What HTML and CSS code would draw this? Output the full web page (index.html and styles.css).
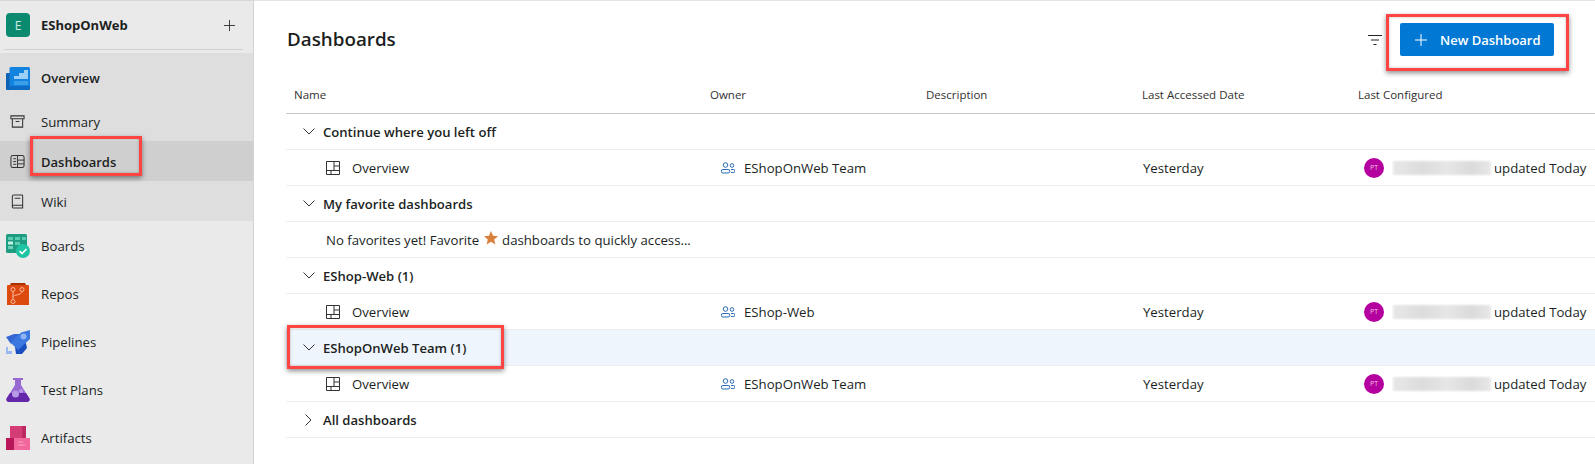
FILE: index.html
```html
<!DOCTYPE html>
<html lang="en">
<head>
  <meta charset="UTF-8" />
  <title>Dashboards - EShopOnWeb</title>
  <link rel="stylesheet" href="styles.css">
</head>
<body>

  <nav class="sidebar">
    <div class="project">
      <span class="project-badge">E</span>
      <span class="project-name">EShopOnWeb</span>
      <svg class="project-add" viewBox="0 0 14 14"><path d="M7 1v12M1 7h12" stroke="#333" stroke-width="1" fill="none"/></svg>
    </div>

    <div class="nav-group">
      <div class="nav-head">
        <svg class="nav-logo" viewBox="0 0 24 24">
          <rect x="0" y="7" width="6" height="17" rx="1" fill="#0e62b0"/>
          <rect x="3.500" y="1" width="20.500" height="23" rx="1.500" fill="#1383e0"/>
          <path d="M8 13V10h5V7h5V4h4v9z" fill="#9cd0f7"/>
          <path d="M8 15h14v4H8z" fill="#3a9ee8"/>
          <path d="M3.500 20h20.500v2.500a1.500 1.500 0 0 1-1.500 1.500H3.500z" fill="#0f6cc4"/>
        </svg>
        <span>Overview</span>
      </div>
      <div class="nav-sub">
        <svg class="nav-icon" viewBox="0 0 16 16"><path d="M1 2h14v3H1zM2.500 5v9h11V5M6 8h4" fill="none" stroke="#333" stroke-width="1.100"/></svg>
        <span>Summary</span>
      </div>
      <div class="nav-sub current">
        <svg class="nav-icon" viewBox="0 0 16 16"><rect x="1" y="1.500" width="14" height="13" rx="2" fill="none" stroke="#333" stroke-width="1.100"/><path d="M8 1.500v13M3.500 5h3M3.500 8h3M3.500 11h3M8 6.500h7M8 10.500h7" fill="none" stroke="#333"/></svg>
        <span>Dashboards</span>
      </div>
      <div class="nav-sub">
        <svg class="nav-icon" viewBox="0 0 16 16"><path d="M2.500 14V2.500a1.500 1.500 0 0 1 1.500-1.500h8.500a1 1 0 0 1 1 1v13H4a1.500 1.500 0 0 1-1.500-1.500a1.500 1.500 0 0 1 1.500-1.500h9.500M5 4.500h6" fill="none" stroke="#333" stroke-width="1.100"/></svg>
        <span>Wiki</span>
      </div>
    </div>

    <div class="nav-item">
      <svg class="nav-logo" viewBox="0 0 24 24">
        <rect y="0" width="21" height="19" rx="1.500" fill="#1f9d83"/>
        <path d="M2 3h5v3H2zM9 3h5v3H9zM16 3h4v3h-4zM9 8h5v3H9z" fill="#5ccbb0"/>
        <path d="M2 7.500h5v3H2z" fill="#c6f0e4"/>
        <path d="M2 12h5v3H2z" fill="#6fd3bb"/>
        <circle cx="17" cy="17" r="7" fill="#1fc4a4"/>
        <path d="M13.500 17l2.500 2.500 4.500-4.500" fill="none" stroke="#fff" stroke-width="1.600"/>
      </svg>
      <span>Boards</span>
    </div>
    <div class="nav-item">
      <svg class="nav-logo" viewBox="0 0 24 24">
        <path d="M4 3l1-2h14l1 2z" fill="#a93200"/>
        <path d="M2 3h20a1 1 0 0 1 1 1v19H1V4a1 1 0 0 1 1-1z" fill="#dc4a10"/>
        <path d="M7 9v9M7 15c0-3 9-1 9-6" fill="none" stroke="#ffb9a0" stroke-width="1"/>
        <circle cx="7" cy="7.500" r="2" fill="#dc4a10" stroke="#ffb9a0"/>
        <circle cx="16" cy="7.500" r="2" fill="#dc4a10" stroke="#ffb9a0"/>
        <circle cx="7" cy="19.500" r="2" fill="#dc4a10" stroke="#ffb9a0"/>
      </svg>
      <span>Repos</span>
    </div>
    <div class="nav-item">
      <svg class="nav-logo" viewBox="0 0 24 24">
        <path d="M0 7l8-3h6L5 14z" fill="#3566d6"/>
        <path d="M9 17l10-8 2 9-5 6h-6z" fill="#1a4fc0"/>
        <path d="M15 2.500L24 0v9L12 20l-7-7z" fill="#3b78e0"/>
        <circle cx="17.500" cy="6.500" r="3" fill="#8fb4f4"/>
        <path d="M0 17h2v4h4v3H0z" fill="#9bb8f5"/>
      </svg>
      <span>Pipelines</span>
    </div>
    <div class="nav-item">
      <svg class="nav-logo" viewBox="0 0 24 24">
        <path d="M7 0h10v2h-2v5l8 13a2.500 2.500 0 0 1-2 4H3a2.500 2.500 0 0 1-2-4L9 7V2H7z" fill="#9568d2"/>
        <path d="M4 15h16l3.500 5.500a2.500 2.500 0 0 1-2 3.500H2.500a2.500 2.500 0 0 1-2-3.500z" fill="#6426ab"/>
        <circle cx="9.500" cy="16" r="3.500" fill="#b99ae6"/>
        <circle cx="15" cy="13" r="2" fill="#b99ae6"/>
      </svg>
      <span>Test Plans</span>
    </div>
    <div class="nav-item">
      <svg class="nav-logo" viewBox="0 0 24 24">
        <rect x="4" y="0" width="16" height="13" fill="#d33c75"/>
        <rect x="16" y="0" width="4" height="13" fill="#bd2a62"/>
        <rect x="0" y="12" width="12" height="12" fill="#b8185a"/>
        <rect x="8" y="12" width="16" height="12" fill="#f2689c"/>
        <path d="M12 16h5M12 19h7" stroke="#f9a5c5" fill="none"/>
      </svg>
      <span>Artifacts</span>
    </div>
  </nav>

  <main class="content">
    <header class="page-head">
      <h1>Dashboards</h1>
      <svg class="filter-icon" viewBox="0 0 14 10"><path d="M0 .5h14M3 5h8M5.500 9.500h3" stroke="#222" stroke-width="1" fill="none"/></svg>
      <button class="new-btn">
        <svg viewBox="0 0 12 12"><path d="M6 0v12M0 6h12" stroke="#fff" stroke-width="1" fill="none"/></svg>
        New Dashboard
      </button>
    </header>

    <div class="row head-row">
      <div>Name</div><div>Owner</div><div>Description</div><div>Last Accessed Date</div><div>Last Configured</div>
    </div>

    <div class="row group"><svg class="chev" viewBox="0 0 12 7"><path d="M.5.500L6 6 11.500.500" fill="none" stroke="#333"/></svg>Continue where you left off</div>
    <div class="row item">
      <div class="name"><svg class="dash-icon" viewBox="0 0 14 14"><path d="M.500.500h13v13H.500zM8 .500v9M8 5h5.500M.500 9.500h13M5 9.500v4" fill="none" stroke="#333"/></svg>Overview</div>
      <div class="owner"><svg class="team-icon" viewBox="0 0 14 12"><circle cx="4.500" cy="3" r="2.300" fill="none" stroke="#2a6cb5"/><circle cx="11" cy="3.500" r="1.800" fill="none" stroke="#2a6cb5"/><path d="M2 7.500h5a1.700 1.700 0 0 1 0 3.500H2a1.700 1.700 0 0 1 0-3.500zM10 7.500h2.500a1.500 1.500 0 0 1 0 3h-2.500" fill="none" stroke="#2a6cb5"/></svg>EShopOnWeb Team</div>
      <div></div>
      <div>Yesterday</div>
      <div class="config"><span class="avatar">PT</span><span class="blurred"></span>updated Today</div>
    </div>

    <div class="row group"><svg class="chev" viewBox="0 0 12 7"><path d="M.5.500L6 6 11.500.500" fill="none" stroke="#333"/></svg>My favorite dashboards</div>
    <div class="row empty">No favorites yet! Favorite <svg class="star" viewBox="0 0 16 16"><path d="M8 0l2.300 5.400 5.700.5-4.300 3.800 1.300 5.800L8 12.400l-5 3.100 1.300-5.800L0 5.900l5.700-.5z" fill="#d9803c"/></svg> dashboards to quickly access...</div>

    <div class="row group"><svg class="chev" viewBox="0 0 12 7"><path d="M.5.500L6 6 11.500.500" fill="none" stroke="#333"/></svg>EShop-Web (1)</div>
    <div class="row item">
      <div class="name"><svg class="dash-icon" viewBox="0 0 14 14"><path d="M.500.500h13v13H.500zM8 .500v9M8 5h5.500M.500 9.500h13M5 9.500v4" fill="none" stroke="#333"/></svg>Overview</div>
      <div class="owner"><svg class="team-icon" viewBox="0 0 14 12"><circle cx="4.500" cy="3" r="2.300" fill="none" stroke="#2a6cb5"/><circle cx="11" cy="3.500" r="1.800" fill="none" stroke="#2a6cb5"/><path d="M2 7.500h5a1.700 1.700 0 0 1 0 3.500H2a1.700 1.700 0 0 1 0-3.500zM10 7.500h2.500a1.500 1.500 0 0 1 0 3h-2.500" fill="none" stroke="#2a6cb5"/></svg>EShop-Web</div>
      <div></div>
      <div>Yesterday</div>
      <div class="config"><span class="avatar">PT</span><span class="blurred"></span>updated Today</div>
    </div>

    <div class="row group selected"><svg class="chev" viewBox="0 0 12 7"><path d="M.5.500L6 6 11.500.500" fill="none" stroke="#333"/></svg>EShopOnWeb Team (1)</div>
    <div class="row item">
      <div class="name"><svg class="dash-icon" viewBox="0 0 14 14"><path d="M.500.500h13v13H.500zM8 .500v9M8 5h5.500M.500 9.500h13M5 9.500v4" fill="none" stroke="#333"/></svg>Overview</div>
      <div class="owner"><svg class="team-icon" viewBox="0 0 14 12"><circle cx="4.500" cy="3" r="2.300" fill="none" stroke="#2a6cb5"/><circle cx="11" cy="3.500" r="1.800" fill="none" stroke="#2a6cb5"/><path d="M2 7.500h5a1.700 1.700 0 0 1 0 3.500H2a1.700 1.700 0 0 1 0-3.500zM10 7.500h2.500a1.500 1.500 0 0 1 0 3h-2.500" fill="none" stroke="#2a6cb5"/></svg>EShopOnWeb Team</div>
      <div></div>
      <div>Yesterday</div>
      <div class="config"><span class="avatar">PT</span><span class="blurred"></span>updated Today</div>
    </div>

    <div class="row group"><svg class="chev closed" viewBox="0 0 7 12"><path d="M.5.500L6 6 .5 11.500" fill="none" stroke="#333"/></svg>All dashboards</div>
  </main>

  <!-- callouts drawn on top of the screenshot -->
  <div class="callout callout-nav"></div>
  <div class="callout callout-btn"></div>
  <div class="callout callout-team"></div>

</body>
</html>
```

FILE: styles.css
```css
* {
  box-sizing: border-box;
}
body {
  margin: 0;
  height: 464px;
  overflow: hidden;
  display: flex;
  background: #fff;
  color: #201f1e;
  font-family: "Open Sans", "Noto Sans", sans-serif;
  font-size: 13.200px;
}

/* sidebar */
.sidebar {
  width: 254px;
  flex: none;
  background: #eaeaea;
  border-right: 1px solid #d4d4d4;
  border-top: 1px solid #d8d8d8;
  overflow: hidden;
}
.project {
  height: 49px;
  margin: 0 10px 3px 4px;
  padding: 0 7px 0 2px;
  display: flex;
  align-items: center;
  gap: 11px;
  border-bottom: 1px solid #d0d0d0;
  font-weight: 600;
}
.project-badge {
  width: 24px;
  height: 24px;
  border-radius: 4px;
  background: #0b8a6f;
  color: #cdebe3;
  font-size: 12px;
  font-weight: 400;
  display: flex;
  align-items: center;
  justify-content: center;
}
.project-name {
  flex: 1;
  font-size: 13px;
  font-weight: 700;
}
.project-add {
  width: 13px;
  height: 13px;
}
.nav-group {
  background: #dedede;
}
.nav-head {
  height: 48px;
  padding: 1px 0 0 6px;
  display: flex;
  align-items: center;
  gap: 11px;
  font-size: 13px;
  font-weight: 600;
}
.nav-sub {
  height: 40px;
  padding: 1px 0 0 10px;
  display: flex;
  align-items: center;
  gap: 16px;
}
.nav-sub.current {
  background: #cfcfcf;
  font-size: 13px;
  font-weight: 600;
}
.nav-item {
  height: 48px;
  padding: 1px 0 0 6px;
  display: flex;
  align-items: center;
  gap: 11px;
}
.nav-logo {
  width: 24px;
  height: 24px;
  flex: none;
}
.nav-icon {
  width: 15px;
  height: 15px;
  flex: none;
}

/* main */
.content {
  flex: 1;
  min-width: 0;
  padding-left: 32px;
  border-top: 1px solid #e4e4e4;
}
.page-head {
  height: 77px;
  display: flex;
  align-items: center;
  padding: 0 41px 0 1px;
}
.page-head h1 {
  flex: 1;
  margin: 0 0 2px;
  font-size: 18.800px;
  font-weight: 600;
}
.filter-icon {
  width: 14px;
  height: 10px;
  margin-right: 18px;
}
.new-btn {
  width: 154px;
  height: 33px;
  border: 0;
  border-radius: 2px;
  background: #0078d4;
  color: #fff;
  font: 600 13px "Open Sans", sans-serif;
  display: flex;
  align-items: center;
  gap: 13px;
  padding: 0 0 0 15px;
}
.new-btn svg {
  width: 12px;
  height: 12px;
}
.row {
  height: 36px;
  padding-left: 9px;
  display: grid;
  grid-template-columns: 416px 216px 216px 216px 1fr;
  align-items: center;
  border-bottom: 1px solid #eee;
}
.head-row {
  padding: 0 0 2px 8px;
  font-size: 11.500px;
  color: #323130;
  border-bottom: 1px solid #c8c8c8;
}
.group {
  display: flex;
  gap: 8px;
  padding-left: 17px;
  font-size: 13.100px;
  font-weight: 600;
}
.group.selected {
  background: #eff5fc;
}
.chev {
  width: 12px;
  height: 7px;
}
.chev.closed {
  width: 7px;
  height: 12px;
  margin: 0 3px 0 2px;
}
.item .name {
  display: flex;
  align-items: center;
  gap: 12px;
  padding-left: 31px;
}
.dash-icon {
  width: 14px;
  height: 14px;
}
.owner {
  display: flex;
  align-items: center;
  gap: 9px;
  padding-left: 10px;
}
.team-icon {
  width: 14px;
  height: 12px;
}
.config {
  display: flex;
  align-items: center;
  padding-left: 5px;
  white-space: nowrap;
}
.avatar {
  width: 20px;
  height: 20px;
  border-radius: 50%;
  background: #b4009e;
  color: #f0c0e8;
  font-size: 7px;
  display: flex;
  align-items: center;
  justify-content: center;
  margin-right: 9px;
}
.blurred {
  width: 98px;
  height: 14px;
  margin-right: 3px;
  background: linear-gradient(90deg, #e8e8e8, #dcdcdc 30%, #e6e6e6 55%, #dadada 80%, #e8e8e8);
  filter: blur(1px);
}
.empty {
  display: block;
  line-height: 37px;
  padding-left: 40px;
}
.star {
  width: 14px;
  height: 14px;
  margin: 0 1px;
  vertical-align: 0;
}

/* red callouts */
.callout {
  position: absolute;
  border: 3px solid #ff4444;
  box-shadow: 0 2px 5px rgba(0, 0, 0, 0.45), inset 0 0 3px rgba(0, 0, 0, 0.25);
}
.callout-nav {
  left: 30px;
  top: 136px;
  width: 112px;
  height: 40px;
}
.callout-btn {
  left: 1386px;
  top: 14px;
  width: 183px;
  height: 57px;
}
.callout-team {
  left: 287px;
  top: 325px;
  width: 217px;
  height: 44px;
}
```
